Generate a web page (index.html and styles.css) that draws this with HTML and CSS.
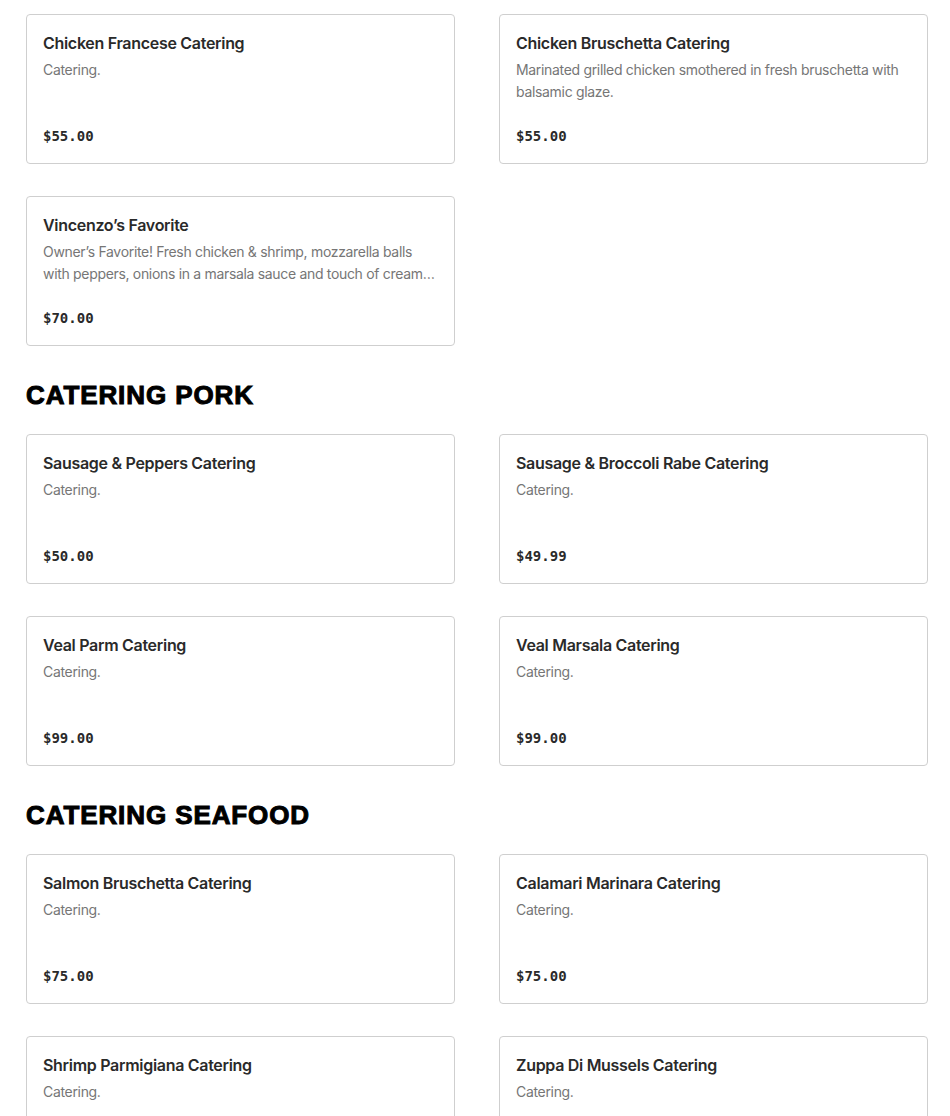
FILE: index.html
```html
<!DOCTYPE html>
<html lang="en">
<head>
<meta charset="utf-8">
<title>Catering Menu</title>
<link rel="stylesheet" href="styles.css">
</head>
<body>
<main class="menu">
  <section class="section">
    <div class="grid">
      <article class="card">
        <h3 class="card-title">Chicken Francese Catering</h3>
        <p class="card-desc">Catering.</p>
        <p class="card-price">$55.00</p>
      </article>
      <article class="card">
        <h3 class="card-title">Chicken Bruschetta Catering</h3>
        <p class="card-desc">Marinated grilled chicken smothered in fresh bruschetta with balsamic glaze.</p>
        <p class="card-price">$55.00</p>
      </article>
      <article class="card">
        <h3 class="card-title">Vincenzo’s Favorite</h3>
        <p class="card-desc">Owner’s Favorite! Fresh chicken &amp; shrimp, mozzarella balls with peppers, onions in a marsala sauce and touch of cream sauce served over penne pasta.</p>
        <p class="card-price">$70.00</p>
      </article>
    </div>
  </section>

  <section class="section">
    <h2 class="section-title">CATERING PORK</h2>
    <div class="grid">
      <article class="card">
        <h3 class="card-title">Sausage &amp; Peppers Catering</h3>
        <p class="card-desc">Catering.</p>
        <p class="card-price">$50.00</p>
      </article>
      <article class="card">
        <h3 class="card-title">Sausage &amp; Broccoli Rabe Catering</h3>
        <p class="card-desc">Catering.</p>
        <p class="card-price">$49.99</p>
      </article>
      <article class="card">
        <h3 class="card-title">Veal Parm Catering</h3>
        <p class="card-desc">Catering.</p>
        <p class="card-price">$99.00</p>
      </article>
      <article class="card">
        <h3 class="card-title">Veal Marsala Catering</h3>
        <p class="card-desc">Catering.</p>
        <p class="card-price">$99.00</p>
      </article>
    </div>
  </section>

  <section class="section">
    <h2 class="section-title">CATERING SEAFOOD</h2>
    <div class="grid">
      <article class="card">
        <h3 class="card-title">Salmon Bruschetta Catering</h3>
        <p class="card-desc">Catering.</p>
        <p class="card-price">$75.00</p>
      </article>
      <article class="card">
        <h3 class="card-title">Calamari Marinara Catering</h3>
        <p class="card-desc">Catering.</p>
        <p class="card-price">$75.00</p>
      </article>
      <article class="card">
        <h3 class="card-title">Shrimp Parmigiana Catering</h3>
        <p class="card-desc">Catering.</p>
        <p class="card-price">$75.00</p>
      </article>
      <article class="card">
        <h3 class="card-title">Zuppa Di Mussels Catering</h3>
        <p class="card-desc">Catering.</p>
        <p class="card-price">$75.00</p>
      </article>
    </div>
  </section>
</main>
</body>
</html>
```

FILE: styles.css
```css
* { box-sizing: border-box; }

html, body {
  margin: 0;
  padding: 0;
  background: #ffffff;
}

body {
  font-family: Inter, "Noto Sans", "Liberation Sans", sans-serif;
  color: #2a2a2a;
}

.menu {
  width: 950px;
  padding: 14px 22px 0 26px;
}

.section {
  margin-bottom: 32px;
}

.section-title {
  margin: 0 0 22px 0;
  font-family: "Liberation Sans", Arial, sans-serif;
  font-weight: 900;
  font-size: 26px;
  line-height: 34px;
  letter-spacing: 0.9px;
  color: #000;
  -webkit-text-stroke: 1px #000;
}

.grid {
  display: grid;
  grid-template-columns: 1fr 1fr;
  column-gap: 44px;
  row-gap: 32px;
}

.card {
  display: flex;
  flex-direction: column;
  height: 150px;
  padding: 16px 16px 17px 16px;
  border: 1px solid #cfcfcf;
  border-radius: 4px;
  background: #fff;
}

.card-title {
  margin: 0 0 4px 0;
  font-size: 16px;
  line-height: 24px;
  font-weight: 600;
  letter-spacing: -0.3px;
  color: #2a2a2a;
}

.card-desc {
  margin: 0;
  font-size: 14px;
  line-height: 22px;
  letter-spacing: -0.32px;
  color: #767676;
  display: -webkit-box;
  -webkit-line-clamp: 2;
  -webkit-box-orient: vertical;
  overflow: hidden;
}

.card-price {
  margin: auto 0 0 0;
  font-family: "DejaVu Sans Mono", "Liberation Mono", monospace;
  font-weight: 700;
  font-size: 14px;
  line-height: 20px;
  color: #2a2a2a;
}
```
